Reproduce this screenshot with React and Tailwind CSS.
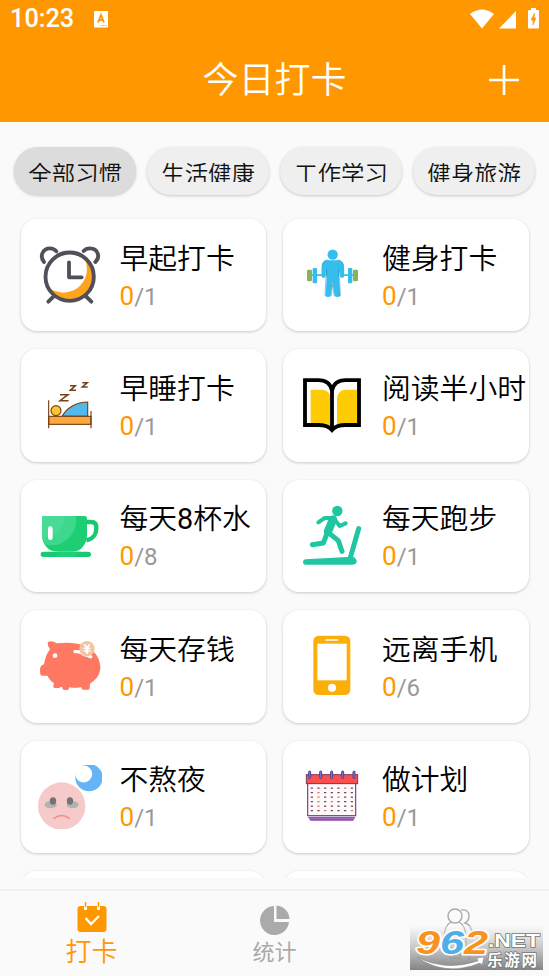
const ClockIcon = () => (
  <>
    <circle cx="95" cy="100" r="70" fill="#ffa41c" />
    <circle cx="76" cy="78" r="71" fill="#fff" />
    <g fill="none" stroke="#50505b" strokeWidth="11.500" strokeLinecap="round" strokeLinejoin="round">
      <circle cx="95" cy="101" r="72.5" />
      <path d="M18 57C4 40 14 16 36 16C46 16 51 20 55 25M172 57C188 42 180 16 156 16C146 16 141 19 137 24" />
      <path d="M93 58V103H131M47 160L31 176M144 160L160 176" />
    </g>
  </>
);

const FitnessIcon = () => (
  <g fill="#35bdee">
    <circle cx="98" cy="35" r="15.5" />
    <path d="M82 52H114Q122 52 122 62L117 105L121 160Q112 164 104 160L98 118L92 160Q84 164 76 160L80 105L74 62Q74 52 82 52Z" />
    <path d="M83 58Q71 58 71 76V98M113 58Q126 58 126 76V98" fill="none" stroke="#35bdee" strokeWidth="13" strokeLinecap="round" />
    <path d="M80 78V96L77 112L75 158M116 78V96L119 112L121 158M98 124L94 158M98 124L102 158M66 66Q70 52 82 51M130 66Q126 52 114 51" fill="none" stroke="#1f6d8a" strokeWidth="1.200" />
    <path d="M35 94H70V99H35ZM126 94H160V99H126Z" />
    <rect x="38" y="75" width="13" height="46" rx="3" />
    <rect x="144" y="75" width="13" height="46" rx="3" />
    <rect x="21" y="80" width="15" height="35" rx="4" fill="#8db158" />
    <rect x="159" y="80" width="15" height="35" rx="4" fill="#8db158" />
  </g>
);

const SleepIcon = () => (
  <g fill="none" stroke="#78421a" strokeWidth="3.5">
    <rect x="32" y="127" width="127" height="24" fill="#faaa3c" />
    <path d="M32 79V163M159 111V163" />
    <circle cx="54" cy="110" r="15" fill="#fcc52f" />
    <path d="M73 126C86 102 115 84 149 84V126Z" fill="#54b8e8" />
    <path d="M66 62H90L66 80H92M96 35H112L97 49H114M133 26H148L133 39H149" strokeWidth="4.500" />
  </g>
);

const BookIcon = () => (
  <g>
    <path d="M32 47H65C80 47 90 57 90 65V155C78 148 72 147 65 147H32Z" fill="#ffcb05" />
    <path d="M111 153V75C111 60 121 47 137 47H171V147H128C120 147 115 150 111 153Z" fill="#ffcb05" />
    <path d="M96 50C92 30 77 18.500 55 18.500H15V153H55C75 153 88 158 96 168C104 158 117 153 137 153H177V18.500H137C115 18.500 100 30 96 50V168" fill="none" stroke="#000" strokeWidth="11.500" />
  </g>
);

const CupIcon = () => (
  <>
    <defs>
      <clipPath id="cup">
        <path d="M12 43Q12 36 19 36H140Q147 36 147 43V90C147 120 130 143 105 143H55C30 143 12 120 12 90Z" />
      </clipPath>
    </defs>
    <path d="M147 54H160Q175 54 175 70C175 92 167 104 145 109" fill="none" stroke="#18c974" strokeWidth="13" />
    <g clipPath="url(#cup)">
      <path d="M0 30H160V150H0Z" fill="#1ece75" />
      <circle cx="40" cy="50" r="74" fill="#3cd88d" />
      <circle cx="20" cy="40" r="60" fill="#48db96" />
    </g>
    <rect x="8" y="143" width="151" height="16" rx="8" fill="#18c974" />
    <path d="M62 143H125L105 159H48Z" fill="#1fd077" />
    <rect x="30" y="67" width="14" height="41" rx="7" fill="#fff" />
  </>
);

const RunIcon = () => (
  <g fill="none" stroke="#20c5a1" strokeWidth="15" strokeLinecap="round" strokeLinejoin="round">
    <circle cx="112" cy="21" r="15.500" fill="#20c5a1" stroke="none" />
    <path d="M99 46L84 82" strokeWidth="25" />
    <path d="M98 42H74L55 55M105 48L119 66L137 58" strokeWidth="12" />
    <path d="M82 86L70 117L37 122M88 88L115 110L126 142" />
    <path d="M176 74L150 164" />
    <path d="M17 174L158 166Q166 174 158 174Z" strokeWidth="16" />
  </g>
);

const PigIcon = () => (
  <>
    <path d="M30 24Q42 18 56 28Q90 24 118 29C160 36 187 66 187 100C187 123 172 140 156 149L155 163Q154 168 148 167H135Q131 167 131 161L127 160Q112 163 94 160L92 166Q90 169 84 168H77Q73 167 73 160L67 158L65 162H50Q45 161 46 155L48 148C39 142 32 133 28 125H11Q6 123 6 110Q5 94 18 91C21 73 26 58 36 46Q28 37 29 24Z" fill="#ff7962" />
    <path d="M111 53Q128 51 137 61Q150 64 158 68" fill="none" stroke="#fff" strokeWidth="10" strokeLinecap="round" />
    <circle cx="51" cy="65" r="7" fill="#fff" />
    <circle cx="147" cy="44" r="23" fill="#f3c4a2" />
    <path d="M139 31L147 42L155 31M137 43H157M137 51H157M147 42V60" fill="none" stroke="#fff" strokeWidth="5" />
  </>
);

const PhoneIcon = () => (
  <>
    <rect x="40" y="5" width="111" height="178" rx="16" fill="#fbaf08" />
    <rect x="52" y="29" width="88" height="110" fill="#fff" />
    <path d="M78 18H113" stroke="#fff" strokeWidth="5" strokeLinecap="round" />
    <circle cx="96" cy="161" r="12" fill="#fff" />
  </>
);

const SadIcon = () => (
  <>
    <circle cx="153" cy="38" r="41" fill="#65b5f6" />
    <circle cx="137" cy="27" r="25.500" fill="#fff" />
    <circle cx="71" cy="123" r="71" fill="#f6c9cb" />
    <ellipse cx="38" cy="119" rx="18" ry="11" fill="#b4b1b1" />
    <ellipse cx="104" cy="119" rx="18" ry="11" fill="#b4b1b1" />
    <ellipse cx="45" cy="108" rx="9.500" ry="11" fill="#737373" />
    <ellipse cx="96" cy="108" rx="9.500" ry="11" fill="#737373" />
    <path d="M47 161Q71 142 95 161" fill="none" stroke="#ee9088" strokeWidth="5" />
  </>
);

const dotRows = [69, 82.5, 96, 109.5, 123, 136.5];
const dotCols = [36, 56, 76, 96, 116, 136, 156];
const redDots = ["0-5", "1-1", "2-1", "2-4", "3-1", "3-3", "4-1", "5-2", "5-6"];

const PlanIcon = () => (
  <>
    <path d="M24 156H166L160 168H32Z" fill="#a873c1" />
    <path d="M25 157H165M29 163H161" stroke="#71408f" strokeWidth="2" />
    <rect x="23" y="54" width="144" height="98" fill="#fffafa" stroke="#71408f" strokeWidth="3.500" />
    <rect x="19" y="29" width="154" height="27" fill="#fc4f4e" stroke="#7b3767" strokeWidth="3" />
    {[29, 62, 95, 128, 162].map((x) => (
      <rect key={x} x={x - 3} y="18" width="6" height="23" rx="3" fill="#8a78c8" stroke="#54418d" strokeWidth="3" />
    ))}
    {dotRows.map((y, r) =>
      dotCols.map((x, c) => (
        <rect
          key={`${r}-${c}`}
          x={x - 4}
          y={y - 1.5}
          width="7"
          height="4"
          rx="1"
          fill={redDots.includes(`${r}-${c}`) ? "#f46d4e" : "#6b4668"}
        />
      ))
    )}
  </>
);

const tabs = ["全部习惯", "生活健康", "工作学习", "健身旅游"];

const habits = [
  { name: "早起打卡", total: 1, Icon: ClockIcon },
  { name: "健身打卡", total: 1, Icon: FitnessIcon },
  { name: "早睡打卡", total: 1, Icon: SleepIcon },
  { name: "阅读半小时", total: 1, Icon: BookIcon },
  { name: <>每天<span className="font-normal">8</span>杯水</>, total: 8, Icon: CupIcon },
  { name: "每天跑步", total: 1, Icon: RunIcon },
  { name: "每天存钱", total: 1, Icon: PigIcon },
  { name: "远离手机", total: 6, Icon: PhoneIcon },
  { name: "不熬夜", total: 1, Icon: SadIcon },
  { name: "做计划", total: 1, Icon: PlanIcon },
];

const cardClass = "h-[112.4px] rounded-[16px] bg-white shadow-[0_1px_3px_rgba(0,0,0,0.2)]";

const HabitCard = ({ name, total, Icon }) => (
  <div className={`${cardClass} group flex items-center pl-[17.5px] overflow-hidden`}>
    <svg viewBox="0 0 192 192" className="w-16 h-16 shrink-0 group-even:-ml-px group-even:mr-px">
      <Icon />
    </svg>
    <div className="pt-[3px] ml-[17.5px] whitespace-nowrap">
      <div className="text-[28.8px] leading-[40px] font-[350] text-black">{name}</div>
      <div className="text-[24px] leading-[35px] text-[#999]">
        <span className="text-[26px] text-[#ff9800]">0</span>/{total}
      </div>
    </div>
  </div>
);

const StatusBar = () => (
  <div className="h-[38px] flex items-center pl-[10px] pr-[9px] text-white">
    <span className="text-[25.3px] leading-none font-medium">10:23</span>
    <svg viewBox="0 0 14 17" className="w-[14px] h-[17px] ml-[20px]">
      <rect width="14" height="16.500" rx="1" fill="#fff" />
      <path d="M4 11.500L7 4L10 11.500M5 9H9" fill="none" stroke="#ff9800" strokeWidth="1.800" />
      <path d="M7 14.500H13" stroke="#ff9800" strokeDasharray="1.200 1" />
    </svg>
    <svg viewBox="0 0 70 22" className="w-[70px] h-[22px] ml-auto">
      <path d="M0 6Q12 -3 24 6L12 20.500Z" fill="#fff" />
      <path d="M46 3V20.500H29Z" fill="#fff" />
      <path d="M58 3Q58 2 59 2H61V0H66V2H68Q69 2 69 3V19.500Q69 20.500 68 20.500H59Q58 20.500 58 19.500Z" fill="#fff" />
      <path d="M64.500 5L61 12H63V17L66 10H64Z" fill="#ff9800" stroke="#ff9800" strokeWidth="0.600" />
    </svg>
  </div>
);

const BottomNav = () => (
  <nav className="h-[87px] shrink-0 grid grid-cols-3 border-t-2 border-[#f0f0f0] bg-[#fafafa]">
    <div className="flex flex-col items-center pt-[10px] text-[#ff9800]">
      <svg viewBox="0 0 30 32" className="w-[30px] h-8">
        <rect x="0.500" y="5" width="29" height="26" rx="3" fill="#ff9800" />
        <path d="M8.500 2V9M21.500 2V9" stroke="#fafafa" strokeWidth="3" />
        <path d="M8.500 1V6M21.500 1V6" stroke="#ff9800" strokeWidth="1.500" />
        <path d="M8.500 17L14 23L22 15" fill="none" stroke="#fff" strokeWidth="2.300" />
      </svg>
      <span className="text-[26px] leading-[38px] font-[350]">打卡</span>
    </div>
    <div className="flex flex-col items-center pt-[14px] text-[#aaa]">
      <svg viewBox="0 0 30 30" className="w-[30px] h-[30px]">
        <path d="M14 1A14.500 14.500 0 1 0 29 17H14Z" fill="#aaa" />
        <path d="M16.500 0.500A14 14 0 0 1 29.500 14H16.500Z" fill="#aaa" />
      </svg>
      <span className="text-[22px] leading-[36px]">统计</span>
    </div>
    <div className="flex flex-col items-center pt-[17px]">
      <svg viewBox="0 0 40 60" className="w-10 h-[60px]" fill="none" stroke="#aaa" strokeWidth="1.400">
        <circle cx="17" cy="8" r="7" />
        <path d="M23 2Q31 1 31 8Q31 13 27 15Q34 17 34 26" />
        <path d="M13 14Q6 18 6 30V44L12 40V50H22V40L28 44V30Q28 18 21 14M31 38V52" />
      </svg>
    </div>
  </nav>
);

const Watermark = () => (
  <div className="absolute left-[410px] top-[926px] w-[133px] h-[44px] bg-linear-to-b from-[#fafafa]/30 via-[#bbb]/80 to-[#777]/90">
    <svg viewBox="0 0 133 44" className="w-full h-full overflow-visible">
      <g fontFamily="Liberation Sans" fontWeight="700" fontStyle="italic" paintOrder="stroke" stroke="#fff" strokeWidth="3" strokeLinejoin="round">
        <text x="6" y="27.500" fontSize="33" textLength="72" lengthAdjust="spacingAndGlyphs">
          <tspan fill="#f7931e">9</tspan>
          <tspan fill="#4eaee8">6</tspan>
          <tspan fill="#f7931e">2</tspan>
        </text>
      </g>
      <path d="M7 31Q35 46 68 35L67 32L74 31L72 39L70 37Q35 51 7 31Z" fill="#fff" stroke="#888" strokeWidth="0.500" />
      <g fill="#fff" stroke="#777" strokeWidth="1.500" paintOrder="stroke" fontWeight="700">
        <text x="78" y="21" fontFamily="Liberation Sans" fontSize="19" textLength="52" lengthAdjust="spacingAndGlyphs">.NET</text>
        <text x="77" y="40" fontFamily="Noto Sans CJK SC" fontSize="15.500" textLength="50">乐游网</text>
      </g>
    </svg>
  </div>
);

export default function App() {
  return (
    <div className="relative w-[549px] h-[976px] flex flex-col overflow-hidden bg-[#fafafa] font-[Roboto,'Noto_Sans_CJK_SC',sans-serif]">
      <header className="h-[122px] shrink-0 bg-[#ff9800] text-white">
        <StatusBar />
        <div className="h-[84px] grid grid-cols-[1fr_auto_1fr] items-center">
          <h1 className="col-start-2 pt-[2px] text-[36px] leading-[48px] font-[350]">今日打卡</h1>
          <svg viewBox="0 0 32 32" className="w-8 h-8 justify-self-end mr-[29px]">
            <path d="M16 1V31M1 16H31" stroke="#fff" strokeWidth="2.600" />
          </svg>
        </div>
      </header>

      <div className="shrink-0 mt-[25px] ml-[14px] flex gap-[10.7px]">
        {tabs.map((tab, i) => (
          <button
            key={tab}
            className={`w-[122.3px] h-[48px] shrink-0 pt-[16px] flex items-start justify-center rounded-full shadow-[0_1px_3px_rgba(0,0,0,0.2)] ${
              i === 0 ? "bg-[#dcdcdc]" : "bg-[#efefef]"
            }`}
          >
            <span className="block h-[19px] overflow-hidden text-[23.4px] leading-[25px] font-[350] text-[#111]">{tab}</span>
          </button>
        ))}
      </div>

      <main className="h-[667px] mt-[16px] shrink-0 pt-[8px] px-[20.5px] overflow-hidden">
        <div className="grid grid-cols-2 gap-x-[17px] gap-y-[18px]">
          {habits.map((habit, i) => (
            <HabitCard key={i} {...habit} />
          ))}
          <div className={cardClass} />
          <div className={cardClass} />
        </div>
      </main>

      <div className="flex-1" />
      <BottomNav />
      <Watermark />
    </div>
  );
}
